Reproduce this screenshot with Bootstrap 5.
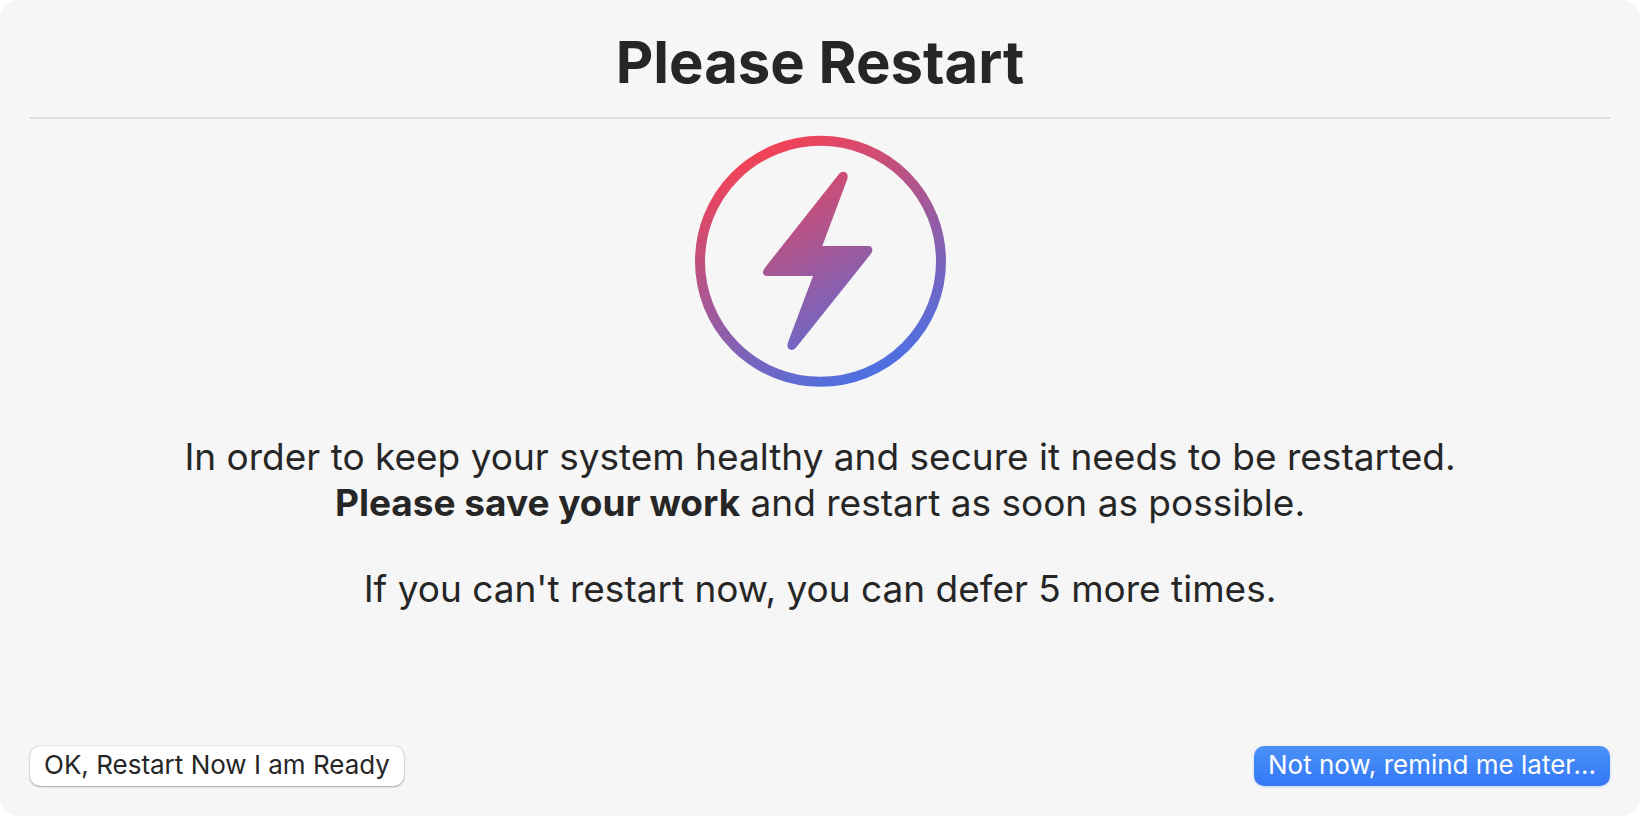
<!DOCTYPE html>
<html lang="en">
<head>
<meta charset="utf-8">
<meta name="viewport" content="width=device-width, initial-scale=1">
<title>Please Restart</title>
<link rel="stylesheet" href="https://cdn.jsdelivr.net/npm/bootstrap@5.3.0/dist/css/bootstrap.min.css">
<style>
  body { background: #fff; color: #262626; font-family: Inter, "Liberation Sans", sans-serif; }
  .dialog-window { background: #f6f6f6; border-radius: 20px; padding: 30px; }
  .dialog-title { font-size: 58px; line-height: 64px; font-weight: 700; }
  .dialog-rule { height: 2px; background: #dcdcdc; opacity: 1; margin: 23px 0 16px; border: 0; }
  .dialog-icon { width: 252px; height: 252px; }
  .dialog-message { font-size: 37px; line-height: 46px; margin-top: 47px; }
  .dialog-message p { margin-bottom: 40px; }
  .btn-dialog { font-size: 26px; line-height: 38px; padding: 0 14px 2px; border: 0; border-radius: 10px; }
  .btn-plain { background: #fff; color: #262626; box-shadow: 0 0 1px rgba(0,0,0,.35), 0 1px 2px rgba(0,0,0,.3); }
  .btn-plain:hover { background: #f0f0f0; }
  .btn-accent { background: linear-gradient(#4b91f7, #3478f6); color: #fff; box-shadow: 0 1px 3px rgba(52,120,246,.3); }
  .btn-accent:hover { background: #3478f6; color: #fff; }
</style>
</head>
<body>
<main class="dialog-window min-vh-100 d-flex flex-column text-center">
  <h1 class="dialog-title m-0">Please Restart</h1>
  <hr class="dialog-rule">
  <svg class="dialog-icon mx-auto flex-shrink-0" viewBox="14 15 252 252" role="img" aria-label="Lightning bolt">
    <defs>
      <linearGradient id="bolt-fill" gradientUnits="userSpaceOnUse" x1="86" y1="31" x2="195" y2="251">
        <stop offset="0" stop-color="#f04357"/>
        <stop offset="1" stop-color="#4e70e1"/>
      </linearGradient>
    </defs>
    <circle cx="140.5" cy="141.3" r="120.5" fill="none" stroke="url(#bolt-fill)" stroke-width="10"/>
    <path fill="url(#bolt-fill)" d="M159 54C163 49.500 168.500 52.500 167.600 57.500Q167.500 59 166.600 61L142.300 126H188.500C192 126 193.500 129.500 191.700 132.500L190 135L116.500 227C112.500 232.500 106.500 229.500 107.500 224.500Q107.600 223 108.500 221L133 156H87C83.200 156 82 152.500 83.800 149.500L85.500 147Z"/>
  </svg>
  <div class="dialog-message">
    <p>In order to keep your system healthy and secure it needs to be restarted.<br><strong class="fw-bold">Please save your work</strong> and restart as soon as possible.</p>
    <p>If you can't restart now, you can defer 5 more times.</p>
  </div>
  <div class="d-flex flex-wrap justify-content-between gap-3 mt-auto">
    <button type="button" class="btn btn-dialog btn-plain">OK, Restart Now I am Ready</button>
    <button type="button" class="btn btn-dialog btn-accent">Not now, remind me later...</button>
  </div>
</main>
<script src="https://cdn.jsdelivr.net/npm/bootstrap@5.3.0/dist/js/bootstrap.bundle.min.js"></script>
</body>
</html>
